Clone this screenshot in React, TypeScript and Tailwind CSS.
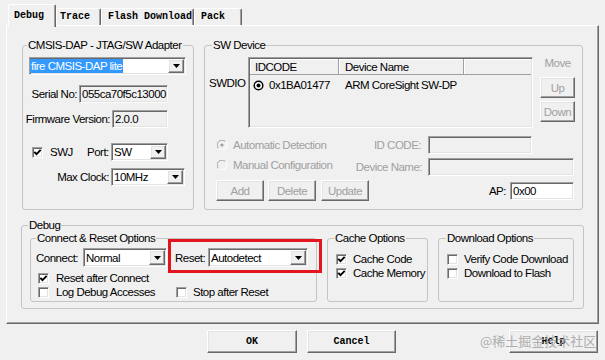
import React from "react";

const SUNKEN =
  "border border-t-[#a0a0a0] border-l-[#a0a0a0] border-r-[#ffffff] border-b-[#ffffff] shadow-[inset_1px_1px_0_#696969,inset_-1px_-1px_0_#e3e3e3]";
const RAISED =
  "border border-t-[#ffffff] border-l-[#ffffff] border-r-[#696969] border-b-[#696969] shadow-[inset_-1px_-1px_0_#a0a0a0,inset_1px_1px_0_#e3e3e3]";

function Arrow() {
  return (
    <div className={`w-[16px] h-full flex items-center justify-center bg-[#f0f0f0] ${RAISED}`}>
      <svg width="7" height="4" viewBox="0 0 7 4">
        <path d="M0 0H7L3.5 4Z" fill="#000" />
      </svg>
    </div>
  );
}

function Select({ className, children }: { className: string; children: React.ReactNode }) {
  return (
    <div className={`flex items-stretch bg-white ${SUNKEN} ${className}`}>
      <div className="flex-1 flex items-center pl-[2px] overflow-hidden whitespace-nowrap">{children}</div>
      <div className="p-[1px]">
        <Arrow />
      </div>
    </div>
  );
}

function Check({ checked }: { checked?: boolean }) {
  return (
    <div className={`w-[11px] h-[11px] bg-white flex items-center justify-center shrink-0 ${SUNKEN}`}>
      {checked && (
        <svg width="9" height="9" viewBox="0 0 9 9">
          <path d="M1.3 3.8 L3.5 6.2 L7.7 1.8" fill="none" stroke="#000" strokeWidth="1.9" />
        </svg>
      )}
    </div>
  );
}

function RadioD({ on }: { on?: boolean }) {
  return (
    <svg width="10" height="10" viewBox="0 0 10 10" className="shrink-0">
      <circle cx="5" cy="5" r="4" fill="#f0f0f0" />
      <path d="M8.5 1.5 A4.95 4.95 0 0 0 1.5 8.5" stroke="#a0a0a0" fill="none" />
      <path d="M1.5 8.5 A4.95 4.95 0 0 0 8.5 1.5" stroke="#ffffff" fill="none" />
      {on && <circle cx="5" cy="5" r="1.6" fill="#a0a0a0" />}
    </svg>
  );
}

function Group({
  title,
  className,
  legendClass,
  children,
}: {
  title: string;
  className: string;
  legendClass: string;
  children: React.ReactNode;
}) {
  return (
    <fieldset className={`border border-[#c4c4c4] rounded-[3px] min-w-0 shrink-0 ${className}`}>
      <legend className={`leading-[14px] px-[1px] ${legendClass}`}>{title}</legend>
      {children}
    </fieldset>
  );
}

function Btn({ className, children }: { className: string; children: React.ReactNode }) {
  return (
    <div className={`flex items-center justify-center bg-[#f0f0f0] shrink-0 ${RAISED} ${className}`}>{children}</div>
  );
}

const TAB =
  "flex items-center bg-[#f0f0f0] border-t border-l border-r border-t-[#ffffff] border-l-[#ffffff] border-r-[#696969] shadow-[inset_-1px_0_0_#a0a0a0] rounded-t-[2px]";

export default function App() {
  return (
    <div className="relative w-[605px] h-[360px] overflow-hidden bg-[#f0f0f0] text-black text-[11.5px] tracking-[-0.5px] leading-[14px] font-['Liberation_Sans',Arial,sans-serif]">
      {/* Tabs */}
      <div className="flex items-end h-[25px] pl-[8px] font-['Liberation_Mono',monospace] font-bold text-[10px] tracking-normal">
        <div className={`relative z-10 -mb-[2px] h-[23px] w-[48px] pl-[5px] ${TAB}`}>Debug</div>
        <div className={`h-[17px] w-[45px] pl-[3px] ${TAB}`}>Trace</div>
        <div className={`h-[17px] w-[93px] pl-[6px] ${TAB}`}>Flash Download</div>
        <div className={`h-[17px] w-[48px] pl-[6px] ${TAB}`}>Pack</div>
      </div>

      {/* Panel */}
      <div className="ml-[6px] w-[593px] h-[299px] border border-t-[#ffffff] border-l-[#ffffff] border-r-[#696969] border-b-[#696969] shadow-[inset_-1px_-1px_0_#a0a0a0] pl-[15px] pt-[12px]">
        <div className="flex">
          {/* CMSIS-DAP group */}
          <Group title="CMSIS-DAP - JTAG/SW Adapter" className="w-[172px] h-[172px]" legendClass="ml-[4px]">
            <div className="pl-[6px] pt-[5px]">
              <Select className="w-[157px] h-[18px]">
                <span className="bg-[#3399ff] text-white -ml-[2px] pl-[1px] pr-[1px]">fire CMSIS-DAP lite</span>
              </Select>
            </div>
            <div className="flex items-center mt-[10px] h-[18px]">
              <div className="w-[54px] text-right whitespace-nowrap">Serial No:</div>
              <div className={`ml-[2px] w-[89px] h-[18px] flex items-center pl-[2px] bg-[#f0f0f0] whitespace-nowrap overflow-hidden ${SUNKEN}`}>
                055ca70f5c13000
              </div>
            </div>
            <div className="flex items-center mt-[7px] h-[18px]">
              <div className="w-[87px] text-right whitespace-nowrap">Firmware Version:</div>
              <div className={`ml-[2px] w-[56px] h-[18px] flex items-center pl-[2px] bg-[#f0f0f0] ${SUNKEN}`}>2.0.0</div>
            </div>
            <div className="flex items-center mt-[15px] h-[18px] pl-[9px]">
              <Check checked />
              <span className="ml-[7px] w-[37px]">SWJ</span>
              <span className="w-[24px]">Port:</span>
              <Select className="w-[57px] h-[18px]">SW</Select>
            </div>
            <div className="flex items-center mt-[7px] h-[18px]">
              <div className="w-[86px] text-right whitespace-nowrap">Max Clock:</div>
              <Select className="ml-[2px] w-[74px] h-[18px]">10MHz</Select>
            </div>
          </Group>

          {/* SW Device group */}
          <Group title="SW Device" className="ml-[10px] w-[379px] h-[172px]" legendClass="ml-[7px]">
            <div className="flex mt-[5px]">
              <div className="w-[43px] pl-[4px] mt-[19px] shrink-0">SWDIO</div>
              <div className={`w-[285px] h-[71px] p-[1px] bg-[#f0f0f0] shrink-0 ${SUNKEN}`}>
                <div className="flex h-[16px]">
                  <div className="w-[89px] pl-[5px] flex items-center border-r border-b border-[#a0a0a0] shadow-[inset_1px_1px_0_#fff]">
                    IDCODE
                  </div>
                  <div className="w-[125px] pl-[6px] flex items-center border-r border-b border-[#a0a0a0] shadow-[inset_1px_1px_0_#fff]">
                    Device Name
                  </div>
                  <div className="flex-1 border-b border-[#a0a0a0] shadow-[inset_1px_1px_0_#fff]" />
                </div>
                <div className="flex h-[16px] mt-[2px]">
                  <div className="w-[89px] pl-[3px] flex items-center">
                    <svg width="11" height="11" viewBox="0 0 11 11" className="shrink-0">
                      <circle cx="5.5" cy="5.5" r="4.3" fill="#fff" stroke="#000" strokeWidth="1.5" />
                      <circle cx="5.5" cy="5.5" r="2" fill="#000" />
                    </svg>
                    <span className="ml-[5px]">0x1BA01477</span>
                  </div>
                  <div className="pl-[6px] flex items-center whitespace-nowrap">ARM CoreSight SW-DP</div>
                </div>
              </div>
              <div className="ml-[7px] w-[35px] flex flex-col items-center text-[#a0a0a0]">
                <div className="-mt-[1px] h-[14px]">Move</div>
                <Btn className="mt-[7px] w-[35px] h-[21px]">Up</Btn>
                <Btn className="mt-[3px] w-[35px] h-[21px]">Down</Btn>
              </div>
            </div>

            <div className="flex items-center h-[18px] mt-[8px] text-[#a0a0a0]">
              <div className="w-[150px] flex items-center pl-[12px] whitespace-nowrap shrink-0">
                <RadioD on />
                <span className="ml-[6px]">Automatic Detection</span>
              </div>
              <div className="flex-1 text-right pr-[7px] whitespace-nowrap">ID CODE:</div>
              <div className={`w-[104px] h-[18px] bg-[#f0f0f0] shrink-0 ${SUNKEN}`} />
              <div className="w-[50px] shrink-0" />
            </div>
            <div className="flex items-center h-[18px] mt-[4px] text-[#a0a0a0]">
              <div className="w-[150px] flex items-center pl-[12px] -mt-[5px] whitespace-nowrap shrink-0">
                <RadioD />
                <span className="ml-[6px]">Manual Configuration</span>
              </div>
              <div className="flex-1 text-right pr-[6px] whitespace-nowrap">Device Name:</div>
              <div className={`w-[146px] h-[18px] bg-[#f0f0f0] shrink-0 ${SUNKEN}`} />
              <div className="w-[8px] shrink-0" />
            </div>
            <div className="flex items-center h-[21px] mt-[4px] pl-[11px] pr-[8px]">
              <Btn className="w-[48px] h-[21px] text-[#a0a0a0]">Add</Btn>
              <Btn className="ml-[4px] w-[48px] h-[21px] text-[#a0a0a0]">Delete</Btn>
              <Btn className="ml-[5px] w-[48px] h-[21px] text-[#a0a0a0]">Update</Btn>
              <div className="flex-1" />
              <span>AP:</span>
              <div className={`ml-[4px] w-[64px] h-[18px] bg-white flex items-center pl-[2px] ${SUNKEN}`}>0x00</div>
            </div>
          </Group>
        </div>

        {/* Debug group */}
        <Group title="Debug" className="mt-[8px] -ml-[1px] w-[563px] h-[91px]" legendClass="ml-[6px]">
          <div className="flex -mt-[1px] pl-[8px]">
            <Group title="Connect & Reset Options" className="w-[287px] h-[71px]" legendClass="ml-[5px]">
              <div className="flex items-center h-[19px] mt-[3px] pl-[5px]">
                <span className="w-[47px] shrink-0">Connect:</span>
                <Select className="w-[84px] h-[19px] shrink-0">Normal</Select>
                <span className="ml-[8px] w-[33px] shrink-0">Reset:</span>
                <Select className="w-[100px] h-[19px] shrink-0">Autodetect</Select>
              </div>
              <div className="flex items-center h-[14px] mt-[4px] pl-[7px]">
                <Check checked />
                <span className="ml-[7px] whitespace-nowrap">Reset after Connect</span>
              </div>
              <div className="flex items-center h-[14px] pl-[7px]">
                <div className="w-[138px] flex items-center shrink-0">
                  <Check />
                  <span className="ml-[7px] whitespace-nowrap">Log Debug Accesses</span>
                </div>
                <Check />
                <span className="ml-[6px] whitespace-nowrap">Stop after Reset</span>
              </div>
            </Group>

            <Group title="Cache Options" className="ml-[10px] w-[101px] h-[71px]" legendClass="ml-[6px]">
              <div className="flex items-center h-[14px] mt-[7px] pl-[8px]">
                <Check checked />
                <span className="ml-[6px] whitespace-nowrap">Cache Code</span>
              </div>
              <div className="flex items-center h-[14px] pl-[8px]">
                <Check checked />
                <span className="ml-[6px] whitespace-nowrap">Cache Memory</span>
              </div>
            </Group>

            <Group title="Download Options" className="ml-[10px] w-[136px] h-[71px]" legendClass="ml-[7px]">
              <div className="flex items-center h-[14px] mt-[7px] pl-[8px]">
                <Check />
                <span className="ml-[6px] whitespace-nowrap">Verify Code Download</span>
              </div>
              <div className="flex items-center h-[14px] pl-[8px]">
                <Check />
                <span className="ml-[6px] whitespace-nowrap">Download to Flash</span>
              </div>
            </Group>
          </div>
        </Group>
      </div>

      {/* Bottom buttons */}
      <div className="flex mt-[6px] pl-[207px] font-['Liberation_Mono',monospace] font-bold text-[10px] tracking-normal">
        <Btn className="w-[90px] h-[23px]">OK</Btn>
        <Btn className="ml-[10px] w-[89px] h-[23px]">Cancel</Btn>
        <Btn className="ml-[113px] w-[89px] h-[23px]">Help</Btn>
      </div>

      {/* Red annotation */}
      <div className="absolute left-[168px] top-[239px] w-[154px] h-[34px] border-[3px] border-[#e3141d]" />

      {/* Watermark */}
      <div className="absolute left-[480px] top-[332px] text-[13px] leading-[17px] tracking-normal text-[#a8a8a8] opacity-90 font-['Noto_Sans_CJK_SC','Noto_Sans',sans-serif] whitespace-nowrap">
        @稀土掘金技术社区
      </div>
    </div>
  );
}
